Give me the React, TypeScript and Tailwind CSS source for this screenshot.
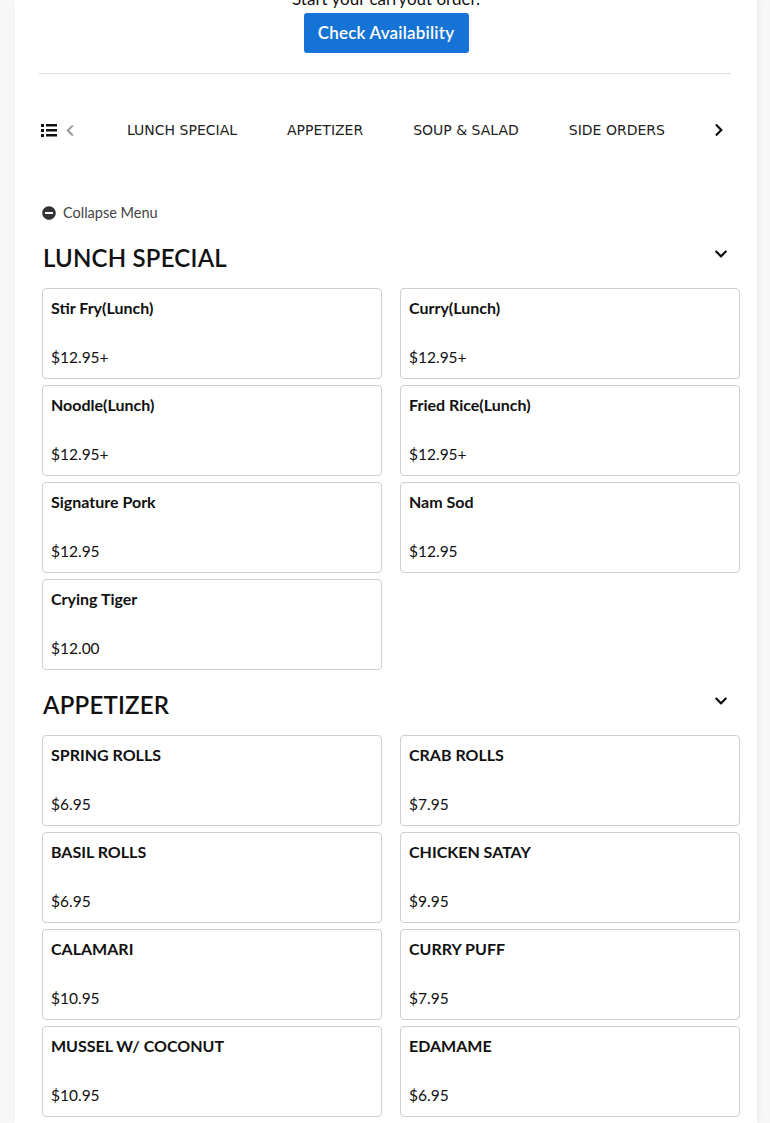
import React from "react";
import { FaChevronLeft, FaChevronRight, FaChevronDown, FaMinusCircle } from "react-icons/fa";

type Item = { name: string; price: string };

const lunch: Item[] = [
  { name: "Stir Fry(Lunch)", price: "$12.95+" },
  { name: "Curry(Lunch)", price: "$12.95+" },
  { name: "Noodle(Lunch)", price: "$12.95+" },
  { name: "Fried Rice(Lunch)", price: "$12.95+" },
  { name: "Signature Pork", price: "$12.95" },
  { name: "Nam Sod", price: "$12.95" },
  { name: "Crying Tiger", price: "$12.00" },
];

const appetizer: Item[] = [
  { name: "SPRING ROLLS", price: "$6.95" },
  { name: "CRAB ROLLS", price: "$7.95" },
  { name: "BASIL ROLLS", price: "$6.95" },
  { name: "CHICKEN SATAY", price: "$9.95" },
  { name: "CALAMARI", price: "$10.95" },
  { name: "CURRY PUFF", price: "$7.95" },
  { name: "MUSSEL W/ COCONUT", price: "$10.95" },
  { name: "EDAMAME", price: "$6.95" },
];

function Card({ item }: { item: Item }) {
  return (
    <div className="h-[91px] border border-[#cfcfcf] rounded-[4px] bg-white px-[8px] pt-[8px] flex flex-col justify-between pb-[10px]">
      <div className="text-[16px] font-bold text-[#111] leading-[22px]">{item.name}</div>
      <div className="text-[15.5px] text-[#111] leading-[22px]">{item.price}</div>
    </div>
  );
}

function Section({ title, items, first }: { title: string; items: Item[]; first?: boolean }) {
  return (
    <div className={first ? "" : "mt-[17px]"}>
      <div className="flex items-center justify-between h-[36px] pl-[1px] pr-[12px]">
        <h2 className="text-[24px] font-semibold text-[#111] leading-[36px] tracking-[0.2px]">{title}</h2>
        <FaChevronDown className="text-[#111] w-[14px] h-[14px] -mt-[8px]" />
      </div>
      <div className="grid grid-cols-2 gap-x-[18px] gap-y-[6px] mt-[12px]">
        {items.map((it) => (
          <Card key={it.name} item={it} />
        ))}
      </div>
    </div>
  );
}

function ListIcon() {
  return (
    <svg width="16" height="14" viewBox="0 0 16 14">
      <rect x="0" y="1" width="3" height="3" fill="#111" />
      <rect x="0" y="6" width="3" height="3" fill="#111" />
      <rect x="0" y="11" width="3" height="3" fill="#111" />
      <rect x="5" y="1" width="11" height="2.5" fill="#111" />
      <rect x="5" y="6" width="11" height="2.5" fill="#111" />
      <rect x="5" y="11" width="11" height="2.5" fill="#111" />
    </svg>
  );
}

export default function App() {
  const nav = ["LUNCH SPECIAL", "APPETIZER", "SOUP & SALAD", "SIDE ORDERS"];
  return (
    <div className="min-h-[1123px] bg-[#f7f7f7] overflow-hidden" style={{ fontFamily: "Lato, 'Noto Sans', sans-serif" }}>
      <div className="ml-[15px] w-[742px] bg-white min-h-[1123px] shadow-[2px_0_6px_rgba(0,0,0,0.04)]">
        <div className="flex flex-col items-center">
          <div className="-mt-[11px] text-[17px] leading-[20px] text-[#111]">Start your carryout order.</div>
          <button className="mt-[4px] h-[40px] w-[165px] rounded-[3px] bg-[#1473d4] text-white text-[17px] font-semibold tracking-[0.2px]">
            Check Availability
          </button>
        </div>
        <div className="mt-[20px] ml-[24px] mr-[26px] border-t border-[#dedede]" />
        <div
          className="flex items-center h-[30px] mt-[41px] pl-[26px] text-[14px] text-[#222]"
          style={{ fontFamily: "'DejaVu Sans', Verdana, sans-serif" }}
        >
          <ListIcon />
          <FaChevronLeft className="ml-[8px] w-[10px] h-[13px] text-[#999]" />
          <div className="ml-[52px] flex gap-[50px]">
            {nav.map((n) => (
              <span key={n} className="whitespace-nowrap">{n}</span>
            ))}
          </div>
          <FaChevronRight className="ml-[49px] w-[10px] h-[14px] text-[#111]" />
        </div>
        <div className="pl-[27px] pr-[17px]">
          <div className="mt-[57px] flex items-center gap-[7px] text-[14.5px] text-[#444]">
            <FaMinusCircle className="w-[14px] h-[14px] text-[#333]" />
            <span>Collapse Menu</span>
          </div>
          <div className="mt-[16px]">
            <Section title="LUNCH SPECIAL" items={lunch} first />
            <Section title="APPETIZER" items={appetizer} />
          </div>
        </div>
      </div>
    </div>
  );
}
